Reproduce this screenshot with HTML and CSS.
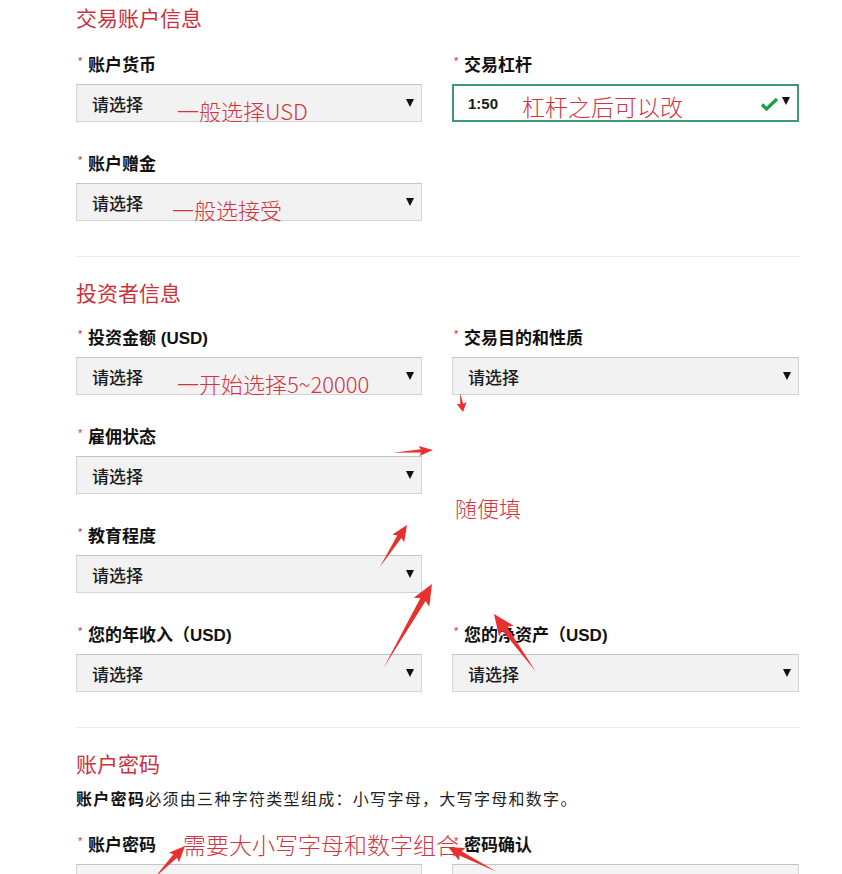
FILE: index.html
```html
<!DOCTYPE html>
<html lang="zh-CN">
<head>
    <meta charset="UTF-8">
    <meta name="viewport" content="width=device-width, initial-scale=1.0">
    <title>开户信息</title>
    <link rel="stylesheet" href="styles.css">
</head>
<body>
    <div class="page">
        <section class="section first">
            <h2 class="section-title">交易账户信息</h2>
            <div class="fields">
                <div class="field">
                    <div class="label"><span class="req">*</span>账户货币</div>
                    <div class="select">
                        <span class="value">请选择</span>
                        <span class="note">一般选择USD</span>
                        <span class="caret"></span>
                    </div>
                </div>
                <div class="field">
                    <div class="label"><span class="req">*</span>交易杠杆</div>
                    <div class="select select-ok">
                        <span class="value value-strong">1:50</span>
                        <span class="note note-near">杠杆之后可以改</span>
                        <svg class="check" width="19" height="14" viewBox="0 0 19 14">
                            <path d="M2 7.5l4.5 4.5L17 2" fill="none" stroke="#1f9a45" stroke-width="3.2"/>
                        </svg>
                        <span class="caret caret-tight"></span>
                    </div>
                </div>
                <div class="field">
                    <div class="label"><span class="req">*</span>账户赠金</div>
                    <div class="select">
                        <span class="value">请选择</span>
                        <span class="note note-left">一般选接受</span>
                        <span class="caret"></span>
                    </div>
                </div>
            </div>
        </section>

        <section class="section">
            <h2 class="section-title">投资者信息</h2>
            <div class="fields">
                <div class="field">
                    <div class="label"><span class="req">*</span>投资金额 (USD)</div>
                    <div class="select">
                        <span class="value">请选择</span>
                        <span class="note">一开始选择5~20000</span>
                        <span class="caret"></span>
                    </div>
                </div>
                <div class="field">
                    <div class="label"><span class="req">*</span>交易目的和性质</div>
                    <div class="select">
                        <span class="value">请选择</span>
                        <span class="caret"></span>
                    </div>
                </div>
                <div class="field">
                    <div class="label"><span class="req">*</span>雇佣状态</div>
                    <div class="select">
                        <span class="value">请选择</span>
                        <span class="caret"></span>
                    </div>
                </div>
                <div class="field"></div>
                <div class="field">
                    <div class="label"><span class="req">*</span>教育程度</div>
                    <div class="select">
                        <span class="value">请选择</span>
                        <span class="caret"></span>
                    </div>
                </div>
                <div class="field"></div>
                <div class="field">
                    <div class="label"><span class="req">*</span>您的年收入（USD)</div>
                    <div class="select">
                        <span class="value">请选择</span>
                        <span class="caret"></span>
                    </div>
                </div>
                <div class="field">
                    <div class="label"><span class="req">*</span>您的净资产（USD)</div>
                    <div class="select">
                        <span class="value">请选择</span>
                        <span class="caret"></span>
                    </div>
                </div>
            </div>
        </section>

        <section class="section last">
            <h2 class="section-title">账户密码</h2>
            <p class="hint"><b>账户密码</b>必须由三种字符类型组成：小写字母，大写字母和数字。</p>
            <div class="fields">
                <div class="field">
                    <div class="label"><span class="req">*</span>账户密码<span class="note note-label">需要大小写字母和数字组合</span></div>
                    <div class="input"></div>
                </div>
                <div class="field">
                    <div class="label"><span class="req">*</span>密码确认</div>
                    <div class="input"></div>
                </div>
            </div>
        </section>
    </div>

    <!-- annotations drawn over the form -->
    <span class="note note-free">随便填</span>
    <svg class="arrows" width="842" height="900" viewBox="0 0 842 900">
        <g fill="#e8312f">
            <polygon transform="translate(463 412) rotate(81)" points="-19,0 -8,-1.5 -9,-5 0,0 -9,5 -8,1.5"/>
            <polygon transform="translate(433 450) rotate(-4)" points="-40,0 -12,-1.6 -14,-5 0,0 -14,5 -12,1.6"/>
            <polygon transform="translate(407 525) rotate(-57)" points="-50,0 -14,-2.5 -16,-7 0,0 -16,7 -14,2.5"/>
            <polygon transform="translate(432 584) rotate(-60)" points="-97,0 -18,-3 -21,-9 0,0 -21,9 -18,3"/>
            <polygon transform="translate(494 614) rotate(-126)" points="-71,0 -18,-3 -21,-9 0,0 -21,9 -18,3"/>
            <polygon transform="translate(185 846) rotate(-46)" points="-44,0 -14,-2.5 -16,-7 0,0 -16,7 -14,2.5"/>
            <polygon transform="translate(448 847) rotate(-153)" points="-54,0 -14,-2.5 -16,-7 0,0 -16,7 -14,2.5"/>
        </g>
    </svg>
</body>
</html>
```

FILE: styles.css
```css
* {
    margin: 0;
    padding: 0;
    box-sizing: border-box;
}

body {
    position: relative;
    background: #fff;
    color: #111;
    font-family: "Liberation Sans", "Noto Sans CJK SC", sans-serif;
}

.page {
    width: 723px;
    margin-left: 76px;
}

.section {
    padding: 21px 0 35px;
    border-bottom: 1px solid #ececec;
}

.section.first {
    padding-top: 3px;
}

.section.last {
    border-bottom: none;
}

.section-title {
    font-family: "Noto Sans CJK SC", sans-serif;
    font-size: 21px;
    line-height: 28px;
    font-weight: 400;
    color: #c9313d;
    margin-bottom: 20px;
}

.section.first .section-title {
    margin-bottom: 22px;
}

.section.last .section-title {
    margin-bottom: 11px;
}

.hint {
    font-family: "Noto Sans CJK SC", sans-serif;
    font-size: 16px;
    line-height: 20px;
    letter-spacing: 1.3px;
    color: #222;
    margin-bottom: 25px;
}

.hint b {
    font-weight: 700;
    color: #111;
}

.fields {
    display: grid;
    grid-template-columns: 346px 347px;
    column-gap: 30px;
    row-gap: 30px;
}

.label {
    display: flex;
    align-items: center;
    height: 20px;
    font-size: 17px;
    font-weight: 700;
    white-space: nowrap;
    margin-bottom: 11px;
}

.req {
    flex-shrink: 0;
    color: #c9313d;
    font-size: 11px;
    font-weight: 400;
    width: 12px;
    padding-left: 2px;
    margin-top: -4px;
}

.select, .input {
    display: flex;
    align-items: center;
    height: 38px;
    padding: 0 6px 0 15px;
    background: #f2f2f2;
    border: 1px solid #d4d4d4;
    border-top-color: #c4c4c4;
}

.input {
    background: #f4f4f4;
}

.select-ok {
    background: #fff;
    border: 2px solid #3f9a72;
    padding-left: 14px;
}

.value {
    font-family: "Noto Sans CJK SC", sans-serif;
    font-size: 17px;
    font-weight: 500;
    color: #1a1a1a;
}

.value-strong {
    font-family: "Liberation Sans", sans-serif;
    font-size: 15px;
    font-weight: 700;
}

.caret {
    margin-left: auto;
    width: 0;
    height: 0;
    border-left: 4px solid transparent;
    border-right: 4px solid transparent;
    border-top: 8px solid #111;
    margin-right: 1px;
}

.caret-tight {
    margin-left: 3px;
    margin-top: -4px;
}

.check {
    margin-left: auto;
    margin-top: 2px;
}

/* red handwritten notes */
.note {
    font-family: "Noto Sans CJK SC", sans-serif;
    font-weight: 300;
    font-size: 22px;
    line-height: 20px;
    color: #d2343f;
    white-space: nowrap;
    margin-left: 34px;
    margin-top: 14px;
}

.note-left {
    margin-left: 29px;
}

.note-near {
    margin-left: 24px;
    margin-top: 6px;
    font-size: 23px;
}

.note-label {
    font-size: 23px;
    margin-left: 27px;
    margin-top: 2px;
}

.note-free {
    position: absolute;
    left: 455px;
    top: 497px;
    margin: 0;
}

.arrows {
    position: absolute;
    top: 0;
    left: 0;
    pointer-events: none;
}
```
